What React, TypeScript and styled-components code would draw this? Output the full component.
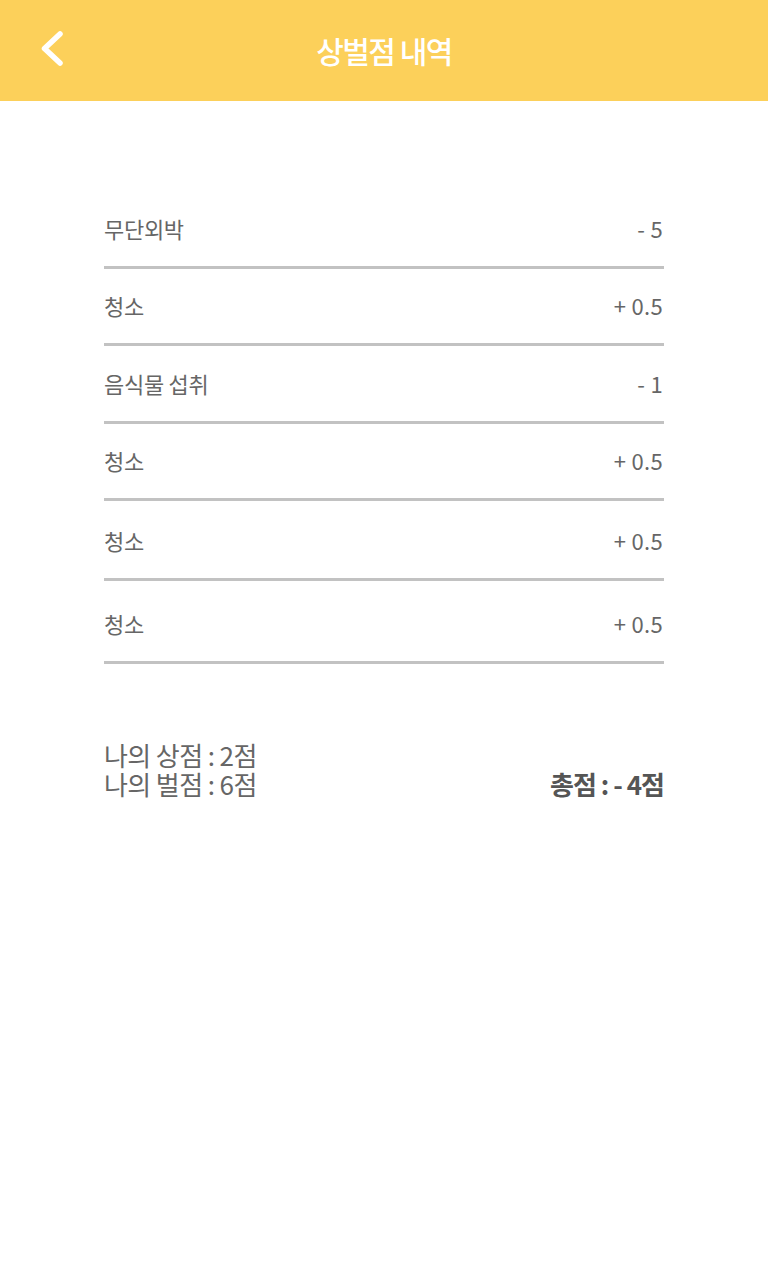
import React from "react";
import styled, { createGlobalStyle } from "styled-components";

const Global = createGlobalStyle`
  html, body { margin: 0; padding: 0; background: #ffffff; }
  body { font-family: "Noto Sans CJK KR", "Noto Sans", sans-serif; }
  * { box-sizing: border-box; }
`;

const Page = styled.div`
  width: 768px;
  min-height: 1280px;
  background: #ffffff;
`;

const Header = styled.header`
  height: 101px;
  background: #fcd05a;
  display: flex;
  align-items: center;
  justify-content: center;
  position: relative;
`;

const BackButton = styled.button`
  position: absolute;
  left: 36px;
  top: 28px;
  width: 30px;
  height: 40px;
  margin: 0;
  padding: 0;
  border: none;
  background: transparent;
  display: block;
  svg { display: block; }
`;

const Title = styled.h1`
  margin: 0;
  margin-top: -2px;
  font-size: 30px;
  font-weight: 500;
  color: #ffffff;
  letter-spacing: -1.5px;
`;

const Content = styled.main`
  padding: 90px 104px 0 104px;
`;

const List = styled.ul`
  list-style: none;
  margin: 0;
  padding: 0;
`;

const Row = styled.li<{ $h: number }>`
  height: ${(p) => p.$h}px;
  display: flex;
  justify-content: space-between;
  align-items: flex-end;
  padding-bottom: 23px;
  border-bottom: 3px solid #c2c2c2;
  color: #666666;
  font-size: 22px;
  line-height: 30px;
`;

const Label = styled.span`
  letter-spacing: -0.3px;
`;

const Score = styled.span`
  letter-spacing: 0.3px;
  margin-right: 1px;
`;

const Summary = styled.section`
  margin-top: 76px;
  display: flex;
  justify-content: space-between;
  align-items: flex-end;
`;

const Mine = styled.div`
  color: #666666;
  font-size: 26px;
  letter-spacing: -0.6px;
`;

const MineLine = styled.div`
  line-height: 29px;
`;

const Total = styled.div`
  color: #555555;
  font-size: 26px;
  line-height: 29px;
  font-weight: 700;
  letter-spacing: -1px;
`;

const items = [
  { label: "무단외박", score: "- 5", h: 78 },
  { label: "청소", score: "+ 0.5", h: 77 },
  { label: "음식물 섭취", score: "- 1", h: 78 },
  { label: "청소", score: "+ 0.5", h: 77 },
  { label: "청소", score: "+ 0.5", h: 80 },
  { label: "청소", score: "+ 0.5", h: 83 },
];

export default function App() {
  return (
    <Page>
      <Global />
      <Header>
        <BackButton aria-label="뒤로">
          <svg width="30" height="40" viewBox="0 0 30 40" fill="none">
            <path
              d="M24 6 L8.5 20.5 L24 35"
              stroke="#ffffff"
              strokeWidth="5.5"
              strokeLinecap="round"
              strokeLinejoin="round"
            />
          </svg>
        </BackButton>
        <Title>상벌점 내역</Title>
      </Header>
      <Content>
        <List>
          {items.map((it, i) => (
            <Row key={i} $h={it.h}>
              <Label>{it.label}</Label>
              <Score>{it.score}</Score>
            </Row>
          ))}
        </List>
        <Summary>
          <Mine>
            <MineLine>나의 상점 : 2점</MineLine>
            <MineLine>나의 벌점 : 6점</MineLine>
          </Mine>
          <Total>총점 : - 4점</Total>
        </Summary>
      </Content>
    </Page>
  );
}
